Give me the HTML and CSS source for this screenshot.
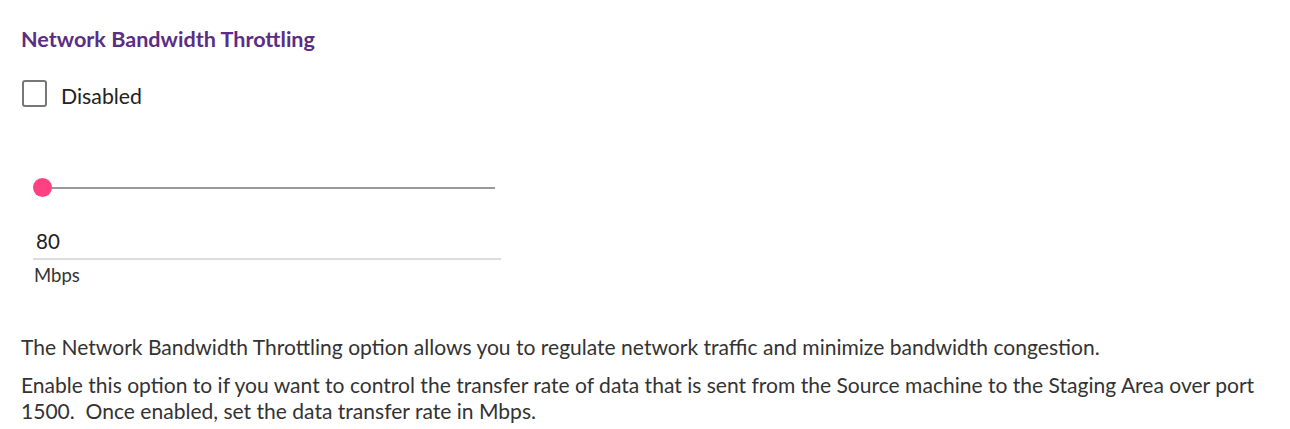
FILE: index.html
```html
<!DOCTYPE html>
<html>
<head>
<meta charset="utf-8">
<link rel="stylesheet" href="styles.css">
</head>
<body>
<div class="panel">
  <h2 class="title">Network Bandwidth Throttling</h2>
  <label class="check">
    <span class="box"></span>
    <span class="check-label">Disabled</span>
  </label>
  <div class="slider">
    <div class="track"></div>
    <div class="thumb"></div>
  </div>
  <div class="field">
    <div class="value">80</div>
    <div class="unit">Mbps</div>
  </div>
  <div class="desc">
    <p>The Network Bandwidth Throttling option allows you to regulate network traffic and minimize bandwidth congestion.</p>
    <p>Enable this option to if you want to control the transfer rate of data that is sent from the Source machine to the Staging Area over port 1500.&nbsp; Once enabled, set the data transfer rate in Mbps.</p>
  </div>
</div>
</body>
</html>
```
FILE: styles.css
```css
html, body {
  margin: 0;
  padding: 0;
  background: #fff;
}
body {
  font-family: Lato, "Noto Sans", sans-serif;
  color: #333;
}
.panel {
  padding: 25px 10px 0 21px;
  display: flex;
  flex-direction: column;
}
.title {
  margin: 0;
  font-size: 21.6px;
  font-weight: 700;
  color: #5b2d84;
  line-height: 28px;
}
.check {
  margin-top: 27px;
  display: flex;
  align-items: flex-start;
  gap: 14px;
}
.box {
  width: 25px;
  height: 27px;
  box-sizing: border-box;
  border: 2px solid #777;
  border-radius: 3px;
  margin-left: 1px;
}
.check-label {
  font-size: 21.3px;
  color: #222;
  line-height: 27px;
  padding-top: 3px;
}
.slider {
  position: relative;
  margin-top: 68px;
  margin-left: 12px;
  width: 462px;
  height: 20px;
}
.track {
  position: absolute;
  left: 9px;
  right: 0;
  top: 9px;
  height: 2px;
  background: #999;
}
.thumb {
  position: absolute;
  left: 0;
  top: 0;
  width: 19px;
  height: 19px;
  border-radius: 50%;
  background: #ff4081;
}
.field {
  margin-top: 30px;
  margin-left: 12px;
  width: 468px;
}
.value {
  font-size: 20.5px;
  color: #222;
  line-height: 26px;
  padding: 0 0 4px 3px;
  border-bottom: 2px solid #ddd;
}
.unit {
  font-size: 18.5px;
  color: #333;
  line-height: 22px;
  margin-top: 4px;
  padding-left: 1px;
}
.desc {
  margin-top: 48px;
}
.desc p {
  margin: 0 0 12px 0;
  font-size: 21.05px;
  line-height: 26px;
  color: #333;
}
```
